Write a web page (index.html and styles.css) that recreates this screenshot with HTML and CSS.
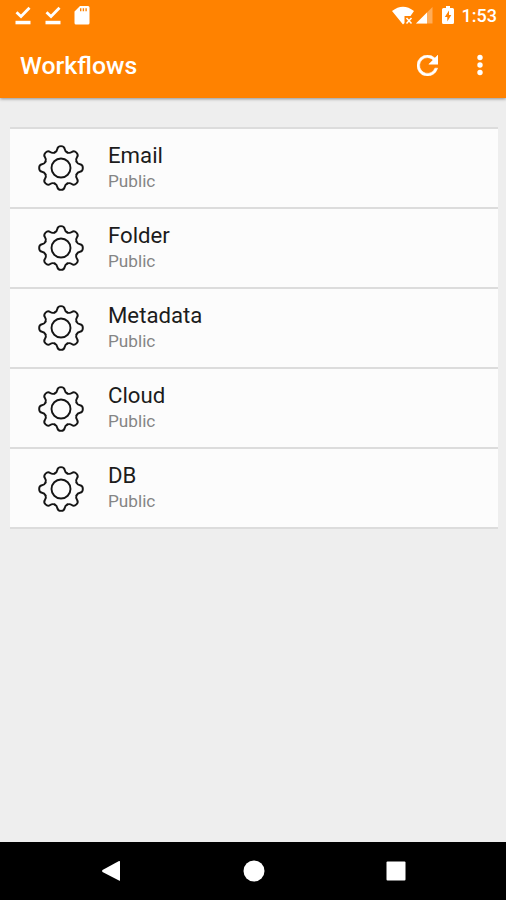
FILE: index.html
```html
<!DOCTYPE html>
<html lang="en">
<head>
<meta charset="utf-8">
<title>Workflows</title>
<link rel="stylesheet" href="styles.css">
</head>
<body>
<svg class="defs" width="0" height="0" aria-hidden="true">
  <defs>
    <path id="tooth" d="M-6.400-15.500C-4.500-16.300-4-17-3.700-19C-3.100-22.800 3.100-22.800 3.700-19C4-17 4.500-16.300 6.400-15.500"/>
    <g id="gear">
      <use href="#tooth"/>
      <use href="#tooth" transform="rotate(45)"/>
      <use href="#tooth" transform="rotate(90)"/>
      <use href="#tooth" transform="rotate(135)"/>
      <use href="#tooth" transform="rotate(180)"/>
      <use href="#tooth" transform="rotate(225)"/>
      <use href="#tooth" transform="rotate(270)"/>
      <use href="#tooth" transform="rotate(315)"/>
      <circle r="9.5"/>
    </g>
  </defs>
</svg>
<header class="top">
  <div class="status">
    <div class="notices">
      <svg width="16" height="20" viewBox="0 0 16 20"><path d="M1.500 7.200L6 11.500L14.500 2.800" fill="none" stroke="#fff" stroke-width="2.800"/><path d="M.5 15.800h15v3.500H.5z"/></svg>
      <svg width="16" height="20" viewBox="0 0 16 20"><path d="M1.500 7.200L6 11.500L14.500 2.800" fill="none" stroke="#fff" stroke-width="2.800"/><path d="M.5 15.800h15v3.500H.5z"/></svg>
      <svg width="16" height="20" viewBox="0 0 16 20"><path fill-rule="evenodd" d="M6 1h8q1.500 0 1.500 1.500v15.500q0 1.500-1.500 1.500H2Q.5 19.500.5 18V6.500zM6 3.200v3h1.400v-3zm2.700 0v3h1.400v-3zm2.700 0v3h1.400v-3z"/></svg>
    </div>
    <div class="signals">
      <svg width="23" height="20" viewBox="0 0 23 20"><path d="M0 6Q11-2.500 22 6l-3.500 5h-6v7L11 19.500z"/><path d="M14.500 13l5 5.500m0-5.500l-5 5.500" fill="none" stroke="#fff" stroke-width="1.500"/></svg>
      <svg class="cell" width="18" height="20" viewBox="0 0 18 20"><path opacity=".35" d="M17.500 2v16.500H1z"/><path d="M12 7.500v11H1z"/></svg>
      <svg class="battery" width="12" height="19" viewBox="0 0 12 19"><path fill-rule="evenodd" d="M4 0h4v2h2.500Q12 2 12 3.500v13Q12 18 10.500 18h-9Q0 18 0 16.500v-13Q0 2 1.500 2H4zM7 4.500L2.800 11h2.500v4.500L9.300 9H7z"/></svg>
      <span class="clock">1:53</span>
    </div>
  </div>
  <div class="appbar">
    <h1>Workflows</h1>
    <svg class="refresh" width="21" height="21" viewBox="4 4 16 16"><path stroke="#fff" stroke-width=".4" d="M17.650 6.350A7.960 7.960 0 0 0 12 4a8 8 0 1 0 7.730 10h-2.080A6 6 0 1 1 12 6c1.660 0 3.140.69 4.220 1.780L13 11h7V4z"/></svg>
    <svg class="more" width="6" height="22" viewBox="0 0 6 22"><circle cx="3" cy="3.500" r="2.700"/><circle cx="3" cy="11" r="2.700"/><circle cx="3" cy="18.500" r="2.700"/></svg>
  </div>
</header>
<main>
  <ul class="list">
    <li><svg class="gear" viewBox="-24 -24 48 48"><use href="#gear"/></svg><div><h2>Email</h2><p>Public</p></div></li>
    <li><svg class="gear" viewBox="-24 -24 48 48"><use href="#gear"/></svg><div><h2>Folder</h2><p>Public</p></div></li>
    <li><svg class="gear" viewBox="-24 -24 48 48"><use href="#gear"/></svg><div><h2>Metadata</h2><p>Public</p></div></li>
    <li><svg class="gear" viewBox="-24 -24 48 48"><use href="#gear"/></svg><div><h2>Cloud</h2><p>Public</p></div></li>
    <li><svg class="gear" viewBox="-24 -24 48 48"><use href="#gear"/></svg><div><h2>DB</h2><p>Public</p></div></li>
  </ul>
</main>
<nav class="navbar">
  <svg width="22" height="22" viewBox="0 0 22 22"><path d="M20 1.500v19Q20 21 19 20.500L2.500 12q-1-1 0-2L19 1Q20 .7 20 1.500z"/></svg>
  <svg width="22" height="22" viewBox="0 0 22 22"><circle cx="11" cy="11" r="10.500"/></svg>
  <svg width="22" height="22" viewBox="0 0 22 22"><rect x="1.500" y="1.500" width="19" height="19" rx="1"/></svg>
</nav>
</body>
</html>
```

FILE: styles.css
```css
* { box-sizing: border-box; margin: 0; padding: 0; }
body {
  height: 900px;
  display: flex;
  flex-direction: column;
  overflow: hidden;
  background: #eee;
  font-family: Roboto, sans-serif;
}
svg { display: block; fill: #fff; flex: none; }
.defs { position: absolute; }
.top {
  height: 98px;
  background: #ff8200;
  color: #fff;
  box-shadow: 0 1px 3px rgba(0, 0, 0, .4);
}
.status {
  height: 32px;
  display: flex;
  justify-content: space-between;
  padding: 5px 9px 0 15px;
}
.notices { display: flex; gap: 13.500px; }
.signals { display: flex; align-items: flex-start; }
.battery { margin: 1px 8px 0 9px; }
.clock { font-size: 18px; font-weight: 500; line-height: 22px; }
.appbar {
  height: 66px;
  display: flex;
  align-items: center;
  padding: 0 23px 0 20px;
}
h1 { flex: 1; padding-top: 1px; font-size: 24.800px; font-weight: 500; line-height: 30px; }
.refresh { margin-right: 39px; }
main { flex: 1; padding: 29px 8px 0 10px; }
.list { list-style: none; border-top: 2px solid #dcdcdc; }
li {
  height: 80.100px;
  display: flex;
  padding-left: 27px;
  background: #fcfcfc;
  border-bottom: 2px solid #dcdcdc;
}
.gear {
  width: 48px;
  height: 48px;
  margin: 15.300px 23px 0 0;
  fill: none;
  stroke: #151515;
  stroke-width: 1.900;
  stroke-linecap: round;
}
h2 { margin-top: 12px; font-size: 22.200px; font-weight: 400; line-height: 28px; color: #1c1c1c; }
li p { font-size: 17.200px; line-height: 24px; color: #858585; }
.navbar {
  height: 58px;
  display: flex;
  justify-content: space-between;
  align-items: center;
  padding: 0 99px 0 100px;
  background: #000;
}
```
